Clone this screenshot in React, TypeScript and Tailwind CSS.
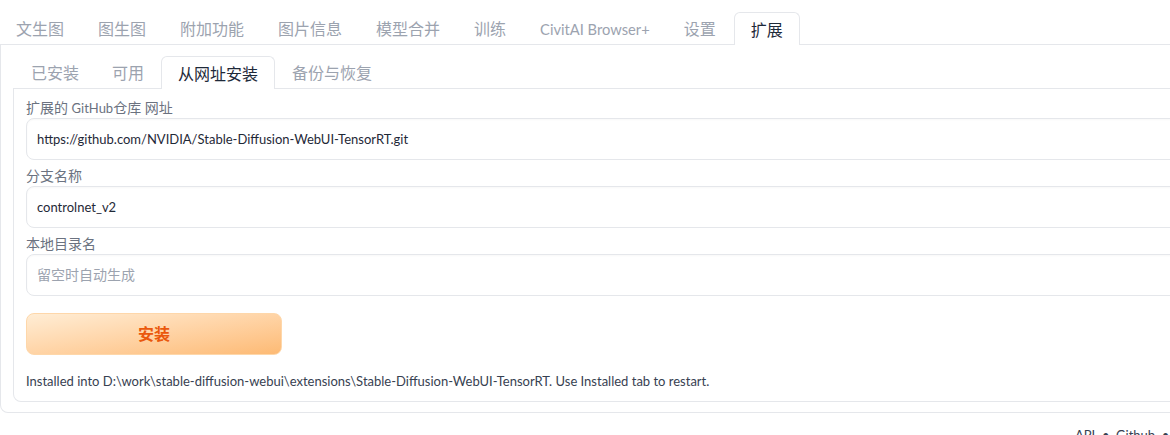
import React from 'react'

const topTabs = ['文生图', '图生图', '附加功能', '图片信息', '模型合并', '训练', 'CivitAI Browser+', '设置', '扩展']
const subTabs = ['已安装', '可用', '从网址安装', '备份与恢复']

const font = { fontFamily: "Lato, 'Noto Sans CJK SC', sans-serif" }

function Tab({ label, active }: { label: string; active: boolean }) {
  // latin labels render wider in Lato, so shrink them a touch
  const latin = /[A-Za-z]/.test(label)
  const size = latin ? 'text-[14.7px]' : 'text-base'
  if (active) {
    return (
      <div className={`relative -mb-px flex h-[33px] items-center rounded-t-md border border-b-0 border-gray-200 bg-white px-4 pt-[2px] text-gray-800 ${size}`}>
        {label}
      </div>
    )
  }
  return <div className={`flex h-8 items-center px-4 pt-[2px] text-[#9ca3af] ${size}`}>{label}</div>
}

function Field({ label, children }: { label: React.ReactNode; children: React.ReactNode }) {
  return (
    <div className="flex flex-col">
      <span className="text-sm leading-5 text-[#6b7280]">{label}</span>
      <div className="flex h-[42px] items-center rounded-lg border border-gray-200 bg-white px-[10px] text-sm shadow-[inset_0_1px_2px_rgba(0,0,0,0.03)]">
        {children}
      </div>
    </div>
  )
}

export default function App() {
  return (
    <div className="h-[435px] w-[1170px] overflow-hidden bg-white" style={font}>
      <div className="w-[1230px]">
        {/* top tabs */}
        <div className="flex h-[45px] items-end gap-[2px] border-b border-gray-200">
          {topTabs.map((t) => (
            <Tab key={t} label={t} active={t === '扩展'} />
          ))}
        </div>

        <div className="rounded-b-lg border-x border-b border-gray-200 px-3 pb-[10px] pt-[11px]">
          <div className="flex h-[33px] items-end gap-px border-b border-gray-200 pl-[2px]">
            {subTabs.map((t) => (
              <Tab key={t} label={t} active={t === '从网址安装'} />
            ))}
          </div>

          <div className="rounded-b-lg border-x border-b border-gray-200 px-3 pb-[10px] pt-[9px]">
            <div className="flex flex-col gap-[6px]">
              <Field
                label={
                  <>
                    扩展的 <span className="text-[13px]">GitHub</span>仓库 网址
                  </>
                }
              >
                <span className="text-[13px] text-[#1f2937]">https://github.com/NVIDIA/Stable-Diffusion-WebUI-TensorRT.git</span>
              </Field>
              <Field label="分支名称">
                <span className="text-[13px] text-[#1f2937]">controlnet_v2</span>
              </Field>
              <Field label="本地目录名">
                <span className="text-[#9ca3af]">留空时自动生成</span>
              </Field>
            </div>

            <button className="mt-[17px] flex h-[42px] w-[256px] items-center justify-center rounded-lg border border-[#fed7aa] bg-gradient-to-br from-[#ffedd5] to-[#fdba74] text-base font-bold text-[#ea580c]">
              安装
            </button>

            <div className="mt-[16px] text-[13px] leading-5 text-[#374151]">
              Installed into D:\work\stable-diffusion-webui\extensions\Stable-Diffusion-WebUI-TensorRT. Use Installed tab to restart.
            </div>
          </div>
        </div>

        <div className="mt-[13px] pl-[1075px] text-[13px] text-[#374151]">
          API&nbsp;&nbsp;•&nbsp;&nbsp;Github&nbsp;&nbsp;•&nbsp;&nbsp;Gradio
        </div>
      </div>
    </div>
  )
}
